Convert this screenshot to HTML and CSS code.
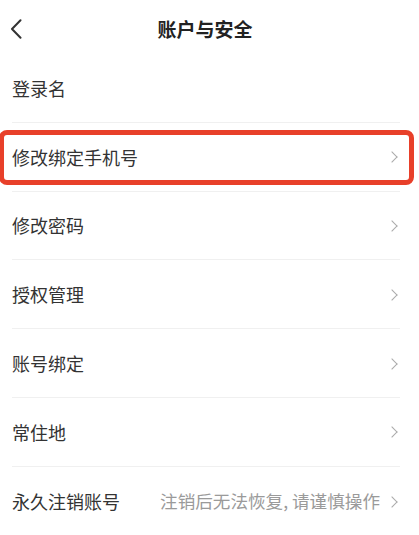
FILE: index.html
```html
<!DOCTYPE html>
<html lang="zh-CN">
<head>
<meta charset="utf-8">
<link rel="stylesheet" href="styles.css">
</head>
<body>
<div class="page">
  <header class="topbar">
    <svg class="back" width="12" height="20" viewBox="0 0 12 20"><path d="M10.5 1.2 L2 10 L10.5 18.8" fill="none" stroke="#333" stroke-width="2" stroke-linecap="round" stroke-linejoin="round"/></svg>
    <h1 class="title">账户与安全</h1>
  </header>
  <ul class="list">
    <li class="row"><span class="label">登录名</span></li>
    <li class="row highlighted"><span class="label">修改绑定手机号</span><span class="chev"></span><span class="mark"></span></li>
    <li class="row"><span class="label">修改密码</span><span class="chev"></span></li>
    <li class="row"><span class="label">授权管理</span><span class="chev"></span></li>
    <li class="row"><span class="label">账号绑定</span><span class="chev"></span></li>
    <li class="row"><span class="label">常住地</span><span class="chev"></span></li>
    <li class="row last"><span class="label">永久注销账号</span><span class="hint">注销后无法恢复, 请谨慎操作</span><span class="chev"></span></li>
  </ul>
</div>
</body>
</html>
```

FILE: styles.css
```css
* { box-sizing: border-box; }
html, body { margin: 0; padding: 0; background: #fff; }
body {
  font-family: "Noto Sans CJK SC", "Noto Sans", sans-serif;
  color: #333;
  overflow: hidden;
}
.page { width: 419px; height: 535px; }
.topbar {
  position: relative;
  height: 54px;
  display: flex;
  align-items: center;
  justify-content: center;
}
.back { position: absolute; left: 10px; top: 19px; }
.title {
  margin: 0 0 0 -9px;
  font-size: 19px;
  font-weight: 700;
  color: #222;
  line-height: 1;
  padding-top: 3px;
}
.list { list-style: none; margin: 0; padding: 0; }
.row {
  position: relative;
  height: 68.8px;
  margin: 0 19px 0 12px;
  border-bottom: 1px solid #f0f0f0;
  display: flex;
  align-items: center;
}
.row.last { border-bottom: none; }
.label {
  flex: 1;
  font-size: 18px;
  color: #333;
  line-height: 1;
}
.hint {
  font-size: 17.6px;
  color: #9a9a9a;
  line-height: 1;
  margin-right: 8px;
}
.chev {
  width: 8px;
  height: 8px;
  border-top: 1.3px solid #aaa;
  border-right: 1.3px solid #aaa;
  transform: rotate(45deg);
  margin-right: 4px;
  margin-top: 1px;
}
.mark {
  position: absolute;
  left: -13px;
  top: 7px;
  width: 415px;
  height: 55px;
  border: 5px solid #e8402a;
  border-radius: 8px;
  pointer-events: none;
}
```
